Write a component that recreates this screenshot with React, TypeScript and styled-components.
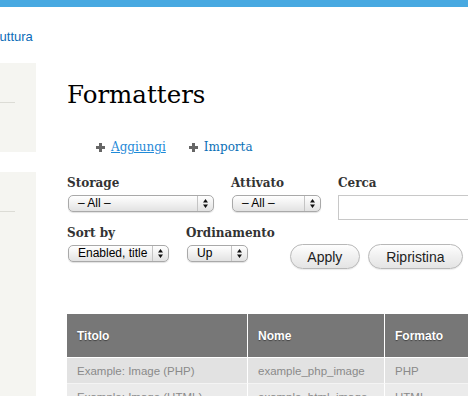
import React from 'react';
import styled, { createGlobalStyle } from 'styled-components';

const GlobalStyle = createGlobalStyle`
  html, body {
    margin: 0;
    padding: 0;
    background: #fff;
    overflow: hidden;
  }
  body {
    width: 468px;
    height: 396px;
    font-family: 'Liberation Sans', Arial, sans-serif;
  }
`;

const TopBar = styled.div`
  height: 7px;
  background: #48a9e1;
`;

const Breadcrumb = styled.div`
  height: 34px;
  padding-top: 22px;
  overflow: hidden;
  font-size: 13px;
  line-height: 16px;
`;

const CrumbLink = styled.a`
  display: inline-block;
  margin-left: -17px;
  color: #0b6cb8;
  text-decoration: none;
`;

const Body = styled.div`
  display: flex;
  align-items: flex-start;
`;

const Sidebar = styled.div`
  width: 36px;
  flex-shrink: 0;
  display: flex;
  flex-direction: column;
  gap: 20px;
`;

const Panel = styled.div<{ $h: number }>`
  height: ${(p) => p.$h}px;
  background: #f5f5f1;
  padding-top: 39px;
  box-sizing: border-box;
`;

const Rule = styled.div`
  width: 15px;
  height: 1px;
  background: #dcdcd6;
`;

const Main = styled.div`
  margin-left: 31px;
  padding-top: 17px;
  width: 520px;
  flex-shrink: 0;
`;

const Title = styled.h1`
  margin: 0;
  font-family: 'DejaVu Serif', Georgia, serif;
  font-weight: normal;
  font-size: 24.5px;
  line-height: 29px;
  color: #000;
`;

const Actions = styled.ul`
  list-style: none;
  margin: 29px 0 0;
  padding: 0 0 0 29px;
  display: flex;
  gap: 23px;
  font-family: 'DejaVu Serif', Georgia, serif;
  font-size: 12px;
  line-height: 18px;
`;

const Action = styled.li`
  display: flex;
  align-items: center;
  gap: 6px;
`;

const ActionLink = styled.a<{ $active?: boolean }>`
  color: ${(p) => (p.$active ? '#1f8ad8' : '#0a6fb6')};
  text-decoration: ${(p) => (p.$active ? 'underline' : 'none')};
`;

const Plus = () => (
  <svg width="9" height="9" viewBox="0 0 9 9">
    <path d="M3 0h3v3h3v3H6v3H3V6H0V3h3z" fill="#666" />
  </svg>
);

const Filters = styled.div`
  margin-top: 19px;
  display: flex;
  flex-direction: column;
  gap: 5px;
`;

const FilterRow = styled.div`
  display: flex;
  align-items: flex-start;
  gap: 17px;
`;

const Field = styled.div`
  display: flex;
  flex-direction: column;
`;

const Label = styled.label`
  font-family: 'DejaVu Serif', Georgia, serif;
  font-weight: bold;
  font-size: 12px;
  line-height: 16px;
  color: #333;
  margin-bottom: 4px;
  white-space: nowrap;
`;

const Select = styled.div<{ $w: number }>`
  width: ${(p) => p.$w}px;
  height: 17px;
  margin-left: 1px;
  box-sizing: border-box;
  display: flex;
  border: 1px solid #a9a9a9;
  border-radius: 5px;
  background: linear-gradient(#ffffff, #f1f1f1 50%, #e2e2e2);
  box-shadow: 0 1px 1px rgba(0, 0, 0, 0.12);
  font-family: 'Liberation Sans', Arial, sans-serif;
  font-size: 12px;
  line-height: 15px;
  color: #000;
`;

const SelectValue = styled.span`
  flex: 1;
  padding-left: 9px;
  white-space: nowrap;
  overflow: hidden;
`;

const SelectArrow = styled.span`
  width: 15px;
  display: flex;
  align-items: center;
  justify-content: center;
  border-left: 1px solid #c4c4c4;
`;

const Arrows = () => (
  <svg width="5" height="9" viewBox="0 0 5 9">
    <path d="M2.5 0L5 3.5H0z M2.5 9L5 5.5H0z" fill="#111" />
  </svg>
);

const SearchInput = styled.input`
  width: 150px;
  height: 25px;
  box-sizing: border-box;
  border: 1px solid #c8c8c8;
  background: #fff;
  outline: none;
`;

const Buttons = styled.div`
  display: flex;
  gap: 8px;
  padding-top: 19px;
  margin-left: -2px;
`;

const Button = styled.button<{ $w: number }>`
  width: ${(p) => p.$w}px;
  height: 25px;
  padding: 0;
  border: 1px solid #b8b8b8;
  border-radius: 13px;
  background: linear-gradient(#fefefe, #f0f0f0 50%, #e4e4e4);
  box-shadow: 0 1px 1px rgba(0, 0, 0, 0.08);
  font-family: 'Liberation Sans', Arial, sans-serif;
  font-size: 14px;
  color: #222;
`;

const Table = styled.table`
  margin-top: 45px;
  border-collapse: separate;
  border-spacing: 0;
  table-layout: fixed;
  width: 466px;
  font-family: 'Liberation Sans', Arial, sans-serif;
  font-size: 11.5px;
`;

const Th = styled.th<{ $w: number }>`
  width: ${(p) => p.$w}px;
  height: 44px;
  box-sizing: border-box;
  padding: 0 10px;
  text-align: left;
  background: #777;
  color: #fff;
  font-size: 12px;
  font-weight: bold;
  text-shadow: 0 1px 1px rgba(0, 0, 0, 0.45);
  border-bottom: 1px solid #fff;
  & + & {
    border-left: 1px solid #fff;
  }
`;

const Tr = styled.tr<{ $alt?: boolean }>`
  background: ${(p) => (p.$alt ? '#ebebeb' : '#e2e2e2')};
`;

const Td = styled.td`
  height: 26px;
  box-sizing: border-box;
  padding: 0 10px;
  color: #8a8a8a;
  border-bottom: 1px solid #f4f4f4;
  white-space: nowrap;
  & + & {
    border-left: 1px solid #fff;
  }
`;

const rows = [
  ['Example: Image (PHP)', 'example_php_image', 'PHP'],
  ['Example: Image (HTML)', 'example_html_image', 'HTML'],
];

const App = () => (
  <>
    <GlobalStyle />
    <TopBar />
    <Breadcrumb>
      <CrumbLink href="#">Struttura</CrumbLink>
    </Breadcrumb>
    <Body>
      <Sidebar>
        <Panel $h={89}>
          <Rule />
        </Panel>
        <Panel $h={260}>
          <Rule />
        </Panel>
      </Sidebar>
      <Main>
        <Title>Formatters</Title>
        <Actions>
          <Action>
            <Plus />
            <ActionLink href="#" $active>
              Aggiungi
            </ActionLink>
          </Action>
          <Action>
            <Plus />
            <ActionLink href="#">Importa</ActionLink>
          </Action>
        </Actions>
        <Filters>
          <FilterRow>
            <Field>
              <Label>Storage</Label>
              <Select $w={146}>
                <SelectValue>– All –</SelectValue>
                <SelectArrow>
                  <Arrows />
                </SelectArrow>
              </Select>
            </Field>
            <Field>
              <Label>Attivato</Label>
              <Select $w={89}>
                <SelectValue>– All –</SelectValue>
                <SelectArrow>
                  <Arrows />
                </SelectArrow>
              </Select>
            </Field>
            <Field>
              <Label>Cerca</Label>
              <SearchInput type="text" />
            </Field>
          </FilterRow>
          <FilterRow>
            <Field>
              <Label>Sort by</Label>
              <Select $w={101}>
                <SelectValue>Enabled, title</SelectValue>
                <SelectArrow>
                  <Arrows />
                </SelectArrow>
              </Select>
            </Field>
            <Field>
              <Label>Ordinamento</Label>
              <Select $w={61}>
                <SelectValue>Up</SelectValue>
                <SelectArrow>
                  <Arrows />
                </SelectArrow>
              </Select>
            </Field>
            <Buttons>
              <Button $w={70}>Apply</Button>
              <Button $w={95}>Ripristina</Button>
            </Buttons>
          </FilterRow>
        </Filters>
        <Table>
          <thead>
            <tr>
              <Th $w={180}>Titolo</Th>
              <Th $w={137}>Nome</Th>
              <Th $w={149}>Formato</Th>
            </tr>
          </thead>
          <tbody>
            {rows.map((r, i) => (
              <Tr key={r[1]} $alt={i % 2 === 1}>
                {r.map((c) => (
                  <Td key={c}>{c}</Td>
                ))}
              </Tr>
            ))}
          </tbody>
        </Table>
      </Main>
    </Body>
  </>
);

export default App;
